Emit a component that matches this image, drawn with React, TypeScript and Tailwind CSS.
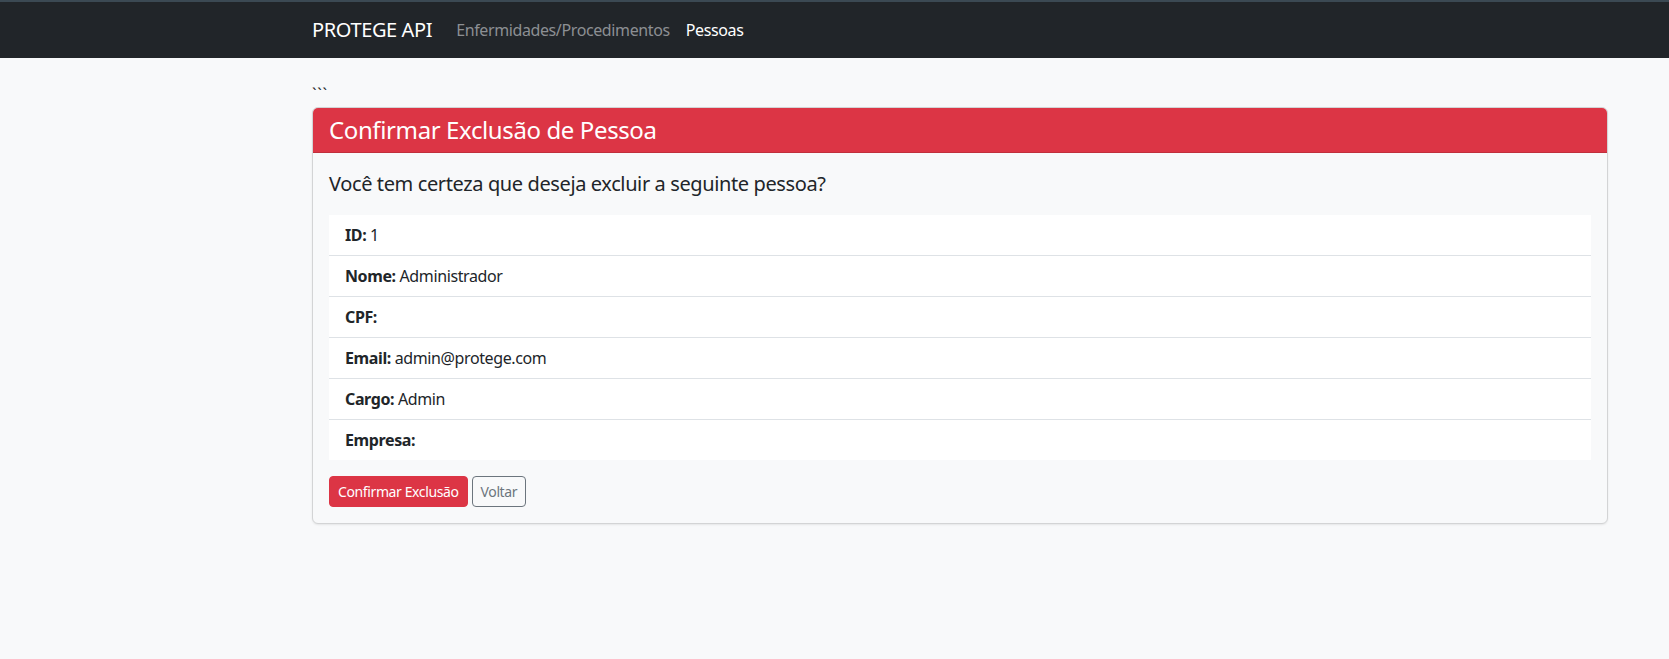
import React from "react";

const rows: [string, string][] = [
  ["ID:", "1"],
  ["Nome:", "Administrador"],
  ["CPF:", ""],
  ["Email:", "admin@protege.com"],
  ["Cargo:", "Admin"],
  ["Empresa:", ""],
];

export default function App() {
  return (
    <div
      className="min-h-[659px] bg-[#f8f9fa] text-[#212529] tracking-[-0.024em]"
      style={{ fontFamily: '"Noto Sans", "Open Sans", sans-serif' }}
    >
      <nav className="h-[58px] bg-[#212529] border-t-2 border-[#3b4953] flex items-center">
        <div className="ml-[312px] flex items-center">
          <span className="text-[20px] leading-[30px] text-white mr-[24px]">PROTEGE API</span>
          <span className="text-[16px] leading-[24px] text-[#8c8f93] mr-[16px]">Enfermidades/Procedimentos</span>
          <span className="text-[16px] leading-[24px] text-white">Pessoas</span>
        </div>
      </nav>
      <main className="ml-[312px] w-[1296px] pt-[24px]">
        <div className="text-[16px] leading-[24px] h-[25px] tracking-[0.05em]">```</div>
        <div className="border border-[#d3d4d5] rounded-[6px] shadow-[0_1px_2px_rgba(0,0,0,0.08)] bg-[#f8f9fa] overflow-hidden">
          <div className="bg-[#dc3545] border-b border-[#c02f3c] px-[16px] py-[8px]">
            <h4 className="text-[24px] leading-[28px] text-white font-normal">Confirmar Exclusão de Pessoa</h4>
          </div>
          <div className="p-[16px]">
            <p className="text-[20px] leading-[30px] mb-[16px]">Você tem certeza que deseja excluir a seguinte pessoa?</p>
            <ul className="bg-white">
              {rows.map(([k, v], i) => (
                <li
                  key={k}
                  className={`px-[16px] py-[8px] text-[16px] leading-[24px] ${i < rows.length - 1 ? "border-b border-[#dee2e6]" : ""}`}
                >
                  <strong className="font-bold">{k}</strong>
                  {v ? " " + v : ""}
                </li>
              ))}
            </ul>
            <div className="mt-[16px] flex gap-[4px]">
              <button className="h-[31px] px-[8px] rounded-[4px] bg-[#dc3545] text-white text-[14px] border border-[#dc3545]">
                Confirmar Exclusão
              </button>
              <button className="h-[31px] px-[8px] rounded-[4px] text-[#6c757d] text-[14px] border border-[#6c757d]">
                Voltar
              </button>
            </div>
          </div>
        </div>
      </main>
    </div>
  );
}
